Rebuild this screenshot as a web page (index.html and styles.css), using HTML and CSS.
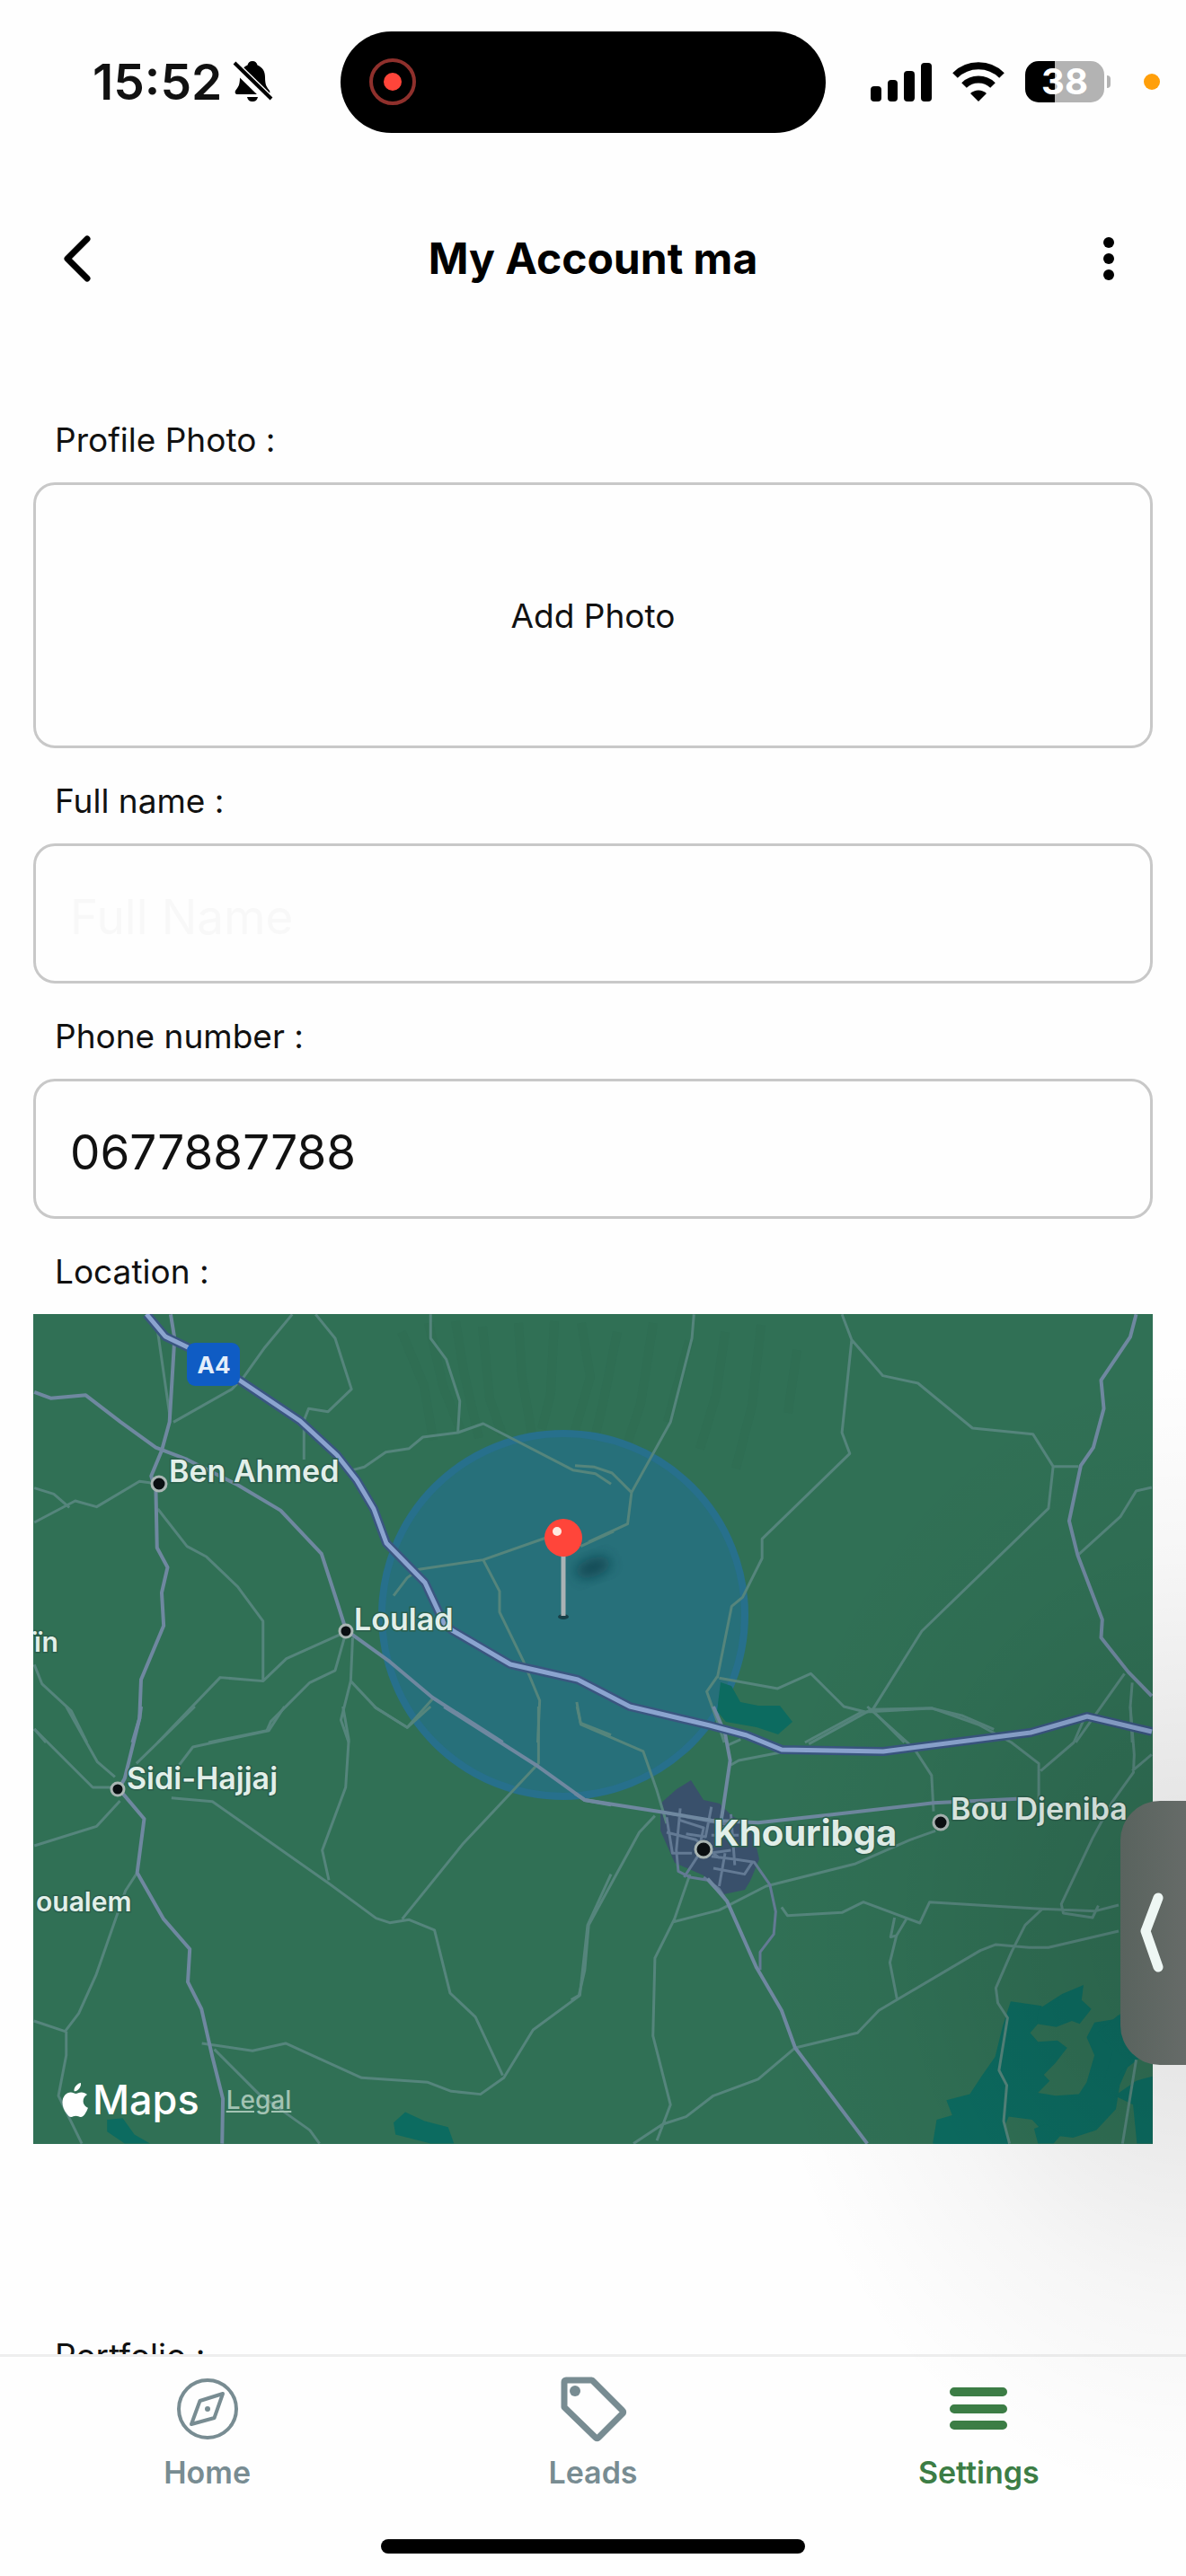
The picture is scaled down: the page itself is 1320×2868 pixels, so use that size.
FILE: index.html
```html
<!DOCTYPE html>
<html lang="en">
<head>
<meta charset="utf-8">
<meta name="viewport" content="width=device-width, initial-scale=1">
<title>My Account</title>
<link rel="stylesheet" href="styles.css">
</head>
<body>
<div class="app">
  <div class="status">
    <div class="status-left">
      <span class="time">15:52</span>
      <svg class="bell" viewBox="0 0 44 48" aria-hidden="true">
        <path d="M22 1c3 0 5 2 5.500 4.500C33 8 36 12 36 19c0 9 2 11 5 15 1 2 0 4-2 4H5c-2 0-3-2-2-4 3-4 5-6 5-15 0-7 3-11 8.500-13.500C17 3 19 1 22 1z"/>
        <path d="M16 41h12c-1 4-3 5-6 5s-5-1-6-5z"/>
        <path class="bell-gap" d="M-1 3l44 43"/>
        <path class="bell-slash" d="M2 3l41 40"/>
      </svg>
    </div>
    <div class="island">
      <svg class="record" viewBox="0 0 52 52" aria-hidden="true"><circle cx="26" cy="26" r="24"/><circle class="record-dot" cx="26" cy="26" r="10"/></svg>
    </div>
    <div class="status-right">
      <svg class="signal" viewBox="0 0 68 44" aria-hidden="true"><rect y="27" width="12" height="17" rx="4"/><rect x="19" y="20" width="11" height="24" rx="4"/><rect x="37" y="10" width="12" height="34" rx="4"/><rect x="56" y="1" width="12" height="43" rx="4"/></svg>
      <svg class="wifi" viewBox="0 0 58 44" aria-hidden="true"><path class="arc" d="M3 15a37 37 0 0 1 52 0M13 26a23 23 0 0 1 32 0"/><path d="M29 44L20 35a13 13 0 0 1 18 0z"/></svg>
      <div class="battery"><span>38</span></div>
      <i class="mic-dot"></i>
    </div>
  </div>

  <header class="header">
    <button class="icon-button" type="button" aria-label="Back"><svg viewBox="0 0 36 52"><path class="back" d="M29 4L7 26l22 22"/></svg></button>
    <h1>My Account ma</h1>
    <button class="icon-button" type="button" aria-label="More"><svg viewBox="0 0 36 52"><circle cx="18" cy="8" r="6"/><circle cx="18" cy="26" r="6"/><circle cx="18" cy="44" r="6"/></svg></button>
  </header>

  <main class="content">
    <form class="form">
      <label class="label" for="photo">Profile Photo :</label>
      <button class="photo" id="photo" type="button">Add Photo</button>
      <label class="label" for="name">Full name :</label>
      <input class="field" id="name" type="text" placeholder="Full Name">
      <label class="label" for="phone">Phone number :</label>
      <input class="field" id="phone" type="tel" value="0677887788">
      <span class="label">Location :</span>

      <div class="map">
        <svg class="map-canvas" viewBox="0 0 1246 924" preserveAspectRatio="xMidYMid slice" role="img" aria-label="Map around Khouribga">
          <defs><filter id="soft" x="-50%" y="-50%" width="200%" height="200%"><feGaussianBlur stdDeviation="7"/></filter></defs>
          <rect class="land" width="1246" height="924"/>
          <g class="relief">
            <path d="M410 20l25 60 10 60M440 10l16 70 20 50M470 8l10 60 16 70M500 14l8 80 14 40M540 10l4 60 12 70M580 8l-4 80-10 40M610 10l10 60-20 70M650 20l-16 80-12 50M690 10l-14 90-20 60M730 30l-24 90M770 20l-10 70-18 60M810 12l-10 90-18 70M850 40l-10 70"/>
          </g>
          <circle class="zone" cx="590" cy="335" r="202"/>
          <!-- lakes -->
          <g class="water" transform="translate(603 437) scale(.4337 .3333)">
            <path d="M918 1460l10-80 40-15-15-50 60-20 30-60 35-65 20-105 20-80 80 15-10 60-20 30 20 30 50-5 25 25-30 50-30 40 15 20-30 40 45 10 60-5 20-40 20-90-20-60 20-50 50-10 45-50 20-10 50 60-20 100-60 60-20 60-10 80-50 70-60 25-70-10-35-50-60-10-10 30 20 90z"/>
            <path d="M1190 1010l60-50 55-30-5 50 25 30-30 50-20-10-40 20-50-10zM1340 1090l55-60 10 100 30 50-50 60-25 0 20-90zM1385 1300l55-50 42-15v225h-40l-10-130zM1178 1410l30-15 40 35-20 30h-40z"/>
          </g>
          <g class="water" transform="translate(-37 437) scale(.4337 .3333)">
            <path d="M275 1380l40-5 30 55 40 30h-65l-45-40zM1010 1390l30-35 50 30 60 20 15 55h-60l-90-30z"/>
          </g>
          <path class="water" d="M765 410l12 4 10 18 20 4 24 0 14 18-16 14-24-8-34-6-10-12z"/>
          <path class="city" d="M746 541l18 4 14 14 22 12 8 36-10 24-6 10-28 6-18-22-32-14-16-36 0-30 18-16 16-10z"/>
          <!-- local roads -->
          <g class="minor" transform="translate(-37 -23) scale(.4337 .3333)">
            <path d="M750 70l-70 110-55 100-30 40-150 110M405 130l32 290M810 70l50 80 42 170-60 75-50-10-12 40v130M1105 70v80l40 70 35 140-5 105M905 590l30-10 55-50 60-12 35-38 90-15 65-30 230 155 58 12 40 35M88 650l50 20 40 45M88 765l105-72 55 20 110-85 30 5M405 720l75 125 50 35 80 100 65 115v200l-110-12L405 1500M675 1295l60-75 145-85M885 1145l-25 115-65 40-100 130-10 30-150 40M905 1150l-5 145-25 130 20 75M900 1295l65 90 80 65 65-95M1010 1010l35-60 30-28 165-32 175-80M1490 845l85-50M1240 890l42 105v70l60 160 43 135-5 140M1480 1365l10 70 78 40M88 1240l20 65 75 90 40 105M88 1455l30 45"/>
          </g>
          <g class="minor" transform="translate(603 -23) scale(.4337 .3333)">
            <path d="M305 70l-5 80-55 280-100 235-50-65-45-20-50-5M145 665l-10 105-100 60M685 70l25 85-25 310 20 70-225 285v65l-50 130-28 30-37 240M710 155l80 120 90 25 140 150 155 20 52 108h65M1227 578l-12 140-325 410-125 260M365 1280l-27 50 30 110 15 60M370 1285l150 35 85-50 85 110 55 18 170-12 80 25 80 45M740 1395l-150 105M765 1395l80 105M1290 875l110-130 40-85 40-12M1410 1270l-125 230M1430 1300l-5 80 5 120"/>
          </g>
          <g class="minor" transform="translate(-37 437) scale(.4337 .3333)">
            <path d="M170 0l80 185 45 50M88 75l150 195h60M88 465l160-65 60-85M500 0l-150 190M730 0l-40 80-195 55-35 60M440 305l105 12 300 275 120 115 35 15 50-10 65 35 40 210 65 80 70 195M880 0l15 110-8 160-60 210 17 100M960 0l85 70 60-70M1382 0v190l-195 270-155 250M1568 560l-60 170-20 235-120 115-75 160-60 55-75-10-60-30-170-15-195-115-85 25-130-25M352 555l-30 60-75 280-45 130-35 60-80-35M170 1085v80l-20 135 60 160M550 1145l115 150 130 120 25 45"/>
          </g>
          <g class="minor" transform="translate(603 437) scale(.4337 .3333)">
            <path d="M5 0l10 60 160 90 35 130 25 110M600 125l160-115 155-5 120 55 85 60 70 70v120M750 0l120 140 45 90 5 120M540 150l-120 30-20 15M425 110l-35 20M1310 30l-30 90-85 95M1425 0l10 160-2 60-55 100-50 120-80 220 5 30 75 15 15-40M1480 160l-50 55M205 365l-40 55-130 310-10 150-15 85-20 15M250 720l120-40 120-80 230-75 140-80 65-30M295 560l-40 150-50 130-5 260 45 230-35 120M530 670l15 28 140-10 55-35 145 70 25-70 275 22 150 8 60-20M820 705l-10 65 15-5 25-55M825 765l-17 90 18 120M150 1460l75-65 60-25 70-70 115-55 95-105 160-50 55-75 260-200 40-20 85 10 50 0 180-55M1200 675l-45 55-35 90-40 120 5 50 25 50-22 175 20 50-8 120 15 75M1440 1180l-35 280"/>
          </g>
          <g class="streets" transform="translate(603 437) scale(.4337 .3333)">
            <path d="M220 352l180 45M235 370l15 120h50M270 340l-10 140 5 70 30 20 45 10 30 40M235 420l75 25 60 60M270 380l60 25-10 60M350 335l-15 100-50-10M400 360l10 170M350 430l70 0M330 470l-50 100M350 500l60 10 50 10 40 75 15 90-5 75-35 60v60M385 490l-15 110M355 540l80 20 20-40M330 570l40 40 20 40M400 480l-55 10M380 400l20 50"/>
          </g>
          <!-- regional roads -->
          <g class="regional" transform="translate(-37 -23) scale(.4337 .3333)">
            <path d="M438 70l10 80-13 280-20 95-27 85 12 50 3 190 27 65-15 85 5 110-58 180-4 130-18 80M88 330l42 20 90-10 90 90 90 85 80 40 130 85 110 85 105 145 35 140 28 115 112 105 110 120 180 150"/>
          </g>
          <g class="regional" transform="translate(603 -23) scale(.4337 .3333)">
            <path d="M1440 70l-15 75-75 145 7 95-27 130-32 60-30 185 22 115 63 215-3 60 70 115 60 80"/>
          </g>
          <g class="regional" transform="translate(-37 437) scale(.4337 .3333)">
            <path d="M362 0l-4 40-38 200-15 35 65 100-18 180 68 155 67 100-5 110 35 90 28 160 27 140-2 150M1140 0l235 195 125 117 68 16"/>
          </g>
          <g class="regional" transform="translate(603 437) scale(.4337 .3333)">
            <path d="M0 290l25 22 195 40 130 28 120 8 180-26 270-40 215-14M355 0l30 90 13 90-18 160-5 40M340 575l50 75 75 220 65 145 35 125 185 320"/>
          </g>
          <!-- motorway -->
          <path class="motorway-case" d="M126 0l21 25 27 13 56 36 67 45 41 38 22 28 19 32 14 38 43 44 21 45 9 8 65 38 75 17 58 30 89 21 41 11 39 16 113 2 164-21 63-18 72 17"/>
          <path class="motorway" d="M126 0l21 25 27 13 56 36 67 45 41 38 22 28 19 32 14 38 43 44 21 45 9 8 65 38 75 17 58 30 89 21 41 11 39 16 113 2 164-21 63-18 72 17"/>
          <g class="town-dot">
            <circle cx="140" cy="189" r="8"/><circle cx="348" cy="353" r="7"/><circle cx="94" cy="529" r="7"/><circle cx="746" cy="596" r="9"/><circle cx="1010" cy="566" r="8"/>
          </g>
          <rect class="shield" x="171" y="32" width="59" height="48" rx="9"/>
          <text class="shield-text" x="201" y="66" text-anchor="middle">A4</text>
          <g class="town">
            <text x="151" y="187">Ben Ahmed</text>
            <text x="357" y="352">Loulad</text>
            <text x="104" y="529">Sidi-Hajjaj</text>
            <text x="1021" y="563">Bou Djeniba</text>
            <text class="small" x="1" y="376">ïn</text>
            <text class="small" x="3" y="665">oualem</text>
            <text class="large" x="757" y="592">Khouribga</text>
          </g>
          <ellipse class="pin-shadow" cx="623" cy="282" rx="20" ry="10" transform="rotate(-20 623 282)"/>
          <ellipse class="pin-base" cx="590" cy="337" rx="6" ry="3"/>
          <path class="pin-stem" d="M590 268v68"/>
          <circle class="pin-head" cx="590" cy="249" r="21"/>
          <circle class="pin-shine" cx="583" cy="242" r="5"/>
        </svg>
        <div class="credit">
          <svg class="apple" viewBox="0 0 30 38" aria-hidden="true"><path d="M21 0c.4 3-1 5.500-2.500 7-1.500 1.600-3.500 2.500-5 2.300C13.200 6.500 14.500 4.200 16 2.700 17.400 1.200 19.500.2 21 0zM28 13c-3 2-4.400 4.500-4.400 7.300 0 3.500 2.200 6.300 5.400 7.500-.8 2.500-2 4.800-3.500 6.900-1.300 1.900-2.700 3.300-4.700 3.300s-2.900-1.200-5.300-1.200c-2.500 0-3.400 1.200-5.300 1.200-2 0-3.500-1.700-4.800-3.600C2.200 30.600.5 26.200.5 21.800.5 15 5 10.600 9.800 10.600c2.300 0 4.300 1.500 5.700 1.500 1.300 0 3.500-1.600 6.200-1.600 2.200 0 4.700.9 6.300 2.500z"/></svg>
          <span class="maps">Maps</span>
          <a class="legal" href="#legal">Legal</a>
        </div>
      </div>
      <span class="label">Portfolio :</span>
    </form>
  </main>

  <nav class="tabs">
    <a class="tab" href="#home">
      <svg viewBox="0 0 80 80" aria-hidden="true"><g class="thin"><circle cx="40" cy="40" r="32"/><path d="M57 23l-9.500 27L22 57l9.500-26z"/></g><circle class="dot" cx="40" cy="40" r="3"/></svg>
      <span>Home</span>
    </a>
    <a class="tab" href="#leads">
      <svg viewBox="0 0 80 80" aria-hidden="true"><path class="thick" d="M10 8h28a2 2 0 0 1 2 1l33 33a2 2 0 0 1 0 3L46 72a2 2 0 0 1-3 0L8 38V10a2 2 0 0 1 2-2z"/><circle class="dot" cx="20" cy="20" r="6"/></svg>
      <span>Leads</span>
    </a>
    <a class="tab active" href="#settings">
      <svg viewBox="0 0 80 80" aria-hidden="true"><path class="bars" d="M13 21h54M13 40h54M13 58h54"/></svg>
      <span>Settings</span>
    </a>
    <i class="home-bar"></i>
  </nav>

  <div class="glow"></div>
  <button class="drawer" type="button" aria-label="Open panel"><svg viewBox="0 0 30 92"><path d="M22 7L8 44l14 40"/></svg></button>
</div>
</body>
</html>
```
FILE: styles.css
```css
* {
  box-sizing: border-box;
}

body {
  margin: 0;
  background: #fefefe;
  color: #111;
  font-family: Inter, "Liberation Sans", sans-serif;
}

button,
input {
  font: inherit;
  color: inherit;
}

.app {
  position: relative;
  display: flex;
  flex-direction: column;
  height: 100vh;
  overflow: hidden;
}

/* status bar */
.status {
  flex: none;
  display: grid;
  grid-template-columns: 379fr 540px 401fr;
  align-items: center;
  height: 182px;
}

.status-left,
.status-right {
  display: flex;
  align-items: center;
}

.status-left {
  gap: 12px;
  padding-left: 103px;
}

.time {
  font-size: 55px;
  font-weight: 600;
  line-height: 64px;
}

.bell {
  width: 44px;
  height: 48px;
  overflow: visible;
}

.bell-gap,
.bell-slash {
  stroke: #fefefe;
  stroke-width: 11px;
}

.bell-slash {
  stroke: #000;
  stroke-width: 4px;
}

.island {
  display: flex;
  align-items: center;
  height: 113px;
  padding-left: 32px;
  border-radius: 57px;
  background: #000;
}

.record {
  width: 52px;
  fill: none;
  stroke: #8f302c;
  stroke-width: 4px;
}

.record-dot {
  fill: #ff453a;
  stroke: none;
}

.status-right {
  padding-left: 50px;
}

.signal {
  width: 68px;
}

.wifi {
  width: 58px;
  margin-left: 23px;
}

.arc {
  fill: none;
  stroke: #000;
  stroke-width: 8px;
}

.battery {
  position: relative;
  width: 88px;
  height: 46px;
  margin-left: 23px;
  border-radius: 15px;
  background: linear-gradient(90deg, #000 38%, #b3b3b3 38%);
  color: #fff;
  font-size: 40px;
  font-weight: 700;
  line-height: 46px;
  text-align: center;
}

.battery::after {
  content: "";
  position: absolute;
  right: -7px;
  top: 16px;
  width: 4px;
  height: 14px;
  border-radius: 0 4px 4px 0;
  background: #b3b3b3;
}

.mic-dot {
  width: 18px;
  height: 18px;
  margin-left: 44px;
  border-radius: 50%;
  background: #ff9f0a;
}

/* title bar */
.header {
  flex: none;
  display: flex;
  align-items: center;
  justify-content: space-between;
  height: 212px;
  padding: 0 68px;
}

.header h1 {
  margin: 0;
  color: #000;
  font-size: 48px;
  font-weight: 700;
  line-height: 56px;
}

.icon-button {
  display: flex;
  padding: 0;
  border: 0;
  background: none;
}

.icon-button svg {
  width: 36px;
  height: 52px;
}

.back {
  fill: none;
  stroke: #000;
  stroke-width: 7px;
  stroke-linecap: round;
  stroke-linejoin: round;
}

/* form */
.content {
  flex: 1;
  min-height: 0;
  overflow: hidden;
  padding: 37px 37px 0;
}

.form {
  display: flex;
  flex-direction: column;
}

.label {
  height: 106px;
  padding: 36px 24px 0;
  font-size: 37px;
  line-height: 46px;
}

.photo,
.field {
  width: 100%;
  border: 3px solid #c8c8c8;
  border-radius: 24px;
  background: none;
}

.photo {
  height: 296px;
  font-size: 37px;
}

.field {
  height: 156px;
  padding: 8px 38px 0;
  font-size: 53px;
}

.field::placeholder {
  color: #f8f8f8;
  opacity: 1;
}

/* map */
.map {
  position: relative;
  height: 924px;
  margin-bottom: 177px;
  overflow: hidden;
}

.map-canvas {
  display: block;
  width: 100%;
  height: 100%;
}

.map-canvas path {
  stroke-linejoin: round;
}

.land {
  fill: #307055;
}

.relief {
  fill: none;
  stroke: #2a684f;
  stroke-width: 10px;
  opacity: .25;
}

.zone {
  fill: #27707a;
  stroke: #27708c;
  stroke-width: 8px;
}

.water {
  fill: #0c6b60;
}

.city {
  fill: #39506b;
}

.minor path,
.streets path {
  fill: none;
  stroke: #55857c;
  stroke-width: 3px;
  vector-effect: non-scaling-stroke;
}

.streets path {
  stroke: #637a94;
}

.regional path {
  fill: none;
  stroke: #6f88a0;
  stroke-width: 4px;
  vector-effect: non-scaling-stroke;
}

.motorway-case,
.motorway {
  fill: none;
  stroke: #3a5680;
  stroke-width: 10px;
}

.motorway {
  stroke: #8ba4cf;
  stroke-width: 5px;
}

.town-dot {
  fill: #0a0f12;
  stroke: #a9b5b3;
  stroke-width: 3px;
}

.shield {
  fill: #0f5cc4;
}

.shield-text {
  fill: #e4eefa;
  font-size: 26px;
  font-weight: 700;
}

.town {
  fill: #e2efe9;
  stroke: #2b5f4c;
  stroke-width: 3px;
  paint-order: stroke;
  font-size: 34px;
  font-weight: 600;
}

.town .small {
  font-size: 30px;
}

.town .large {
  font-size: 40px;
  font-weight: 700;
}

.pin-shadow {
  fill: #0d3f4c;
  opacity: .8;
  filter: url(#soft);
}

.pin-base {
  fill: #174048;
}

.pin-stem {
  stroke: #aab3b5;
  stroke-width: 5px;
}

.pin-head {
  fill: #ff453a;
}

.pin-shine {
  fill: #ffe9e0;
}

.credit {
  position: absolute;
  left: 32px;
  bottom: 21px;
  display: flex;
  align-items: center;
  color: #fff;
}

.apple {
  width: 30px;
  height: 38px;
  fill: #fff;
}

.maps {
  margin-left: 4px;
  font-size: 45px;
  font-weight: 500;
  line-height: 56px;
}

.legal {
  margin-left: 30px;
  color: #a3c3b3;
  font-size: 28px;
  font-weight: 500;
  line-height: 40px;
}

/* tab bar */
.tabs {
  position: relative;
  flex: none;
  display: flex;
  height: 247px;
  padding: 18px 16px 0;
  border-top: 3px solid #eee;
  background: #fefefe;
}

.tab {
  flex: 1;
  display: flex;
  flex-direction: column;
  align-items: center;
  color: #788c92;
  font-size: 34px;
  font-weight: 600;
  line-height: 40px;
  text-decoration: none;
}

.tab svg {
  width: 80px;
  height: 80px;
  margin-bottom: 11px;
  fill: none;
  stroke: currentColor;
  stroke-linejoin: round;
}

.tab .thin {
  stroke-width: 4px;
}

.tab .thick {
  stroke-width: 7px;
}

.tab .dot {
  fill: currentColor;
  stroke: none;
}

.tab .bars {
  stroke-width: 10px;
  stroke-linecap: round;
}

.tab.active {
  color: #3c7d45;
}

.home-bar {
  position: absolute;
  left: 50%;
  bottom: 25px;
  width: 472px;
  height: 16px;
  margin-left: -236px;
  border-radius: 8px;
  background: #000;
}

/* side panel handle and the shade it casts */
.glow {
  position: absolute;
  right: 0;
  bottom: 80px;
  width: 480px;
  height: 1280px;
  background: radial-gradient(ellipse 100% 50% at 100% 50%, rgba(0, 0, 0, .12), rgba(0, 0, 0, .08) 35%, rgba(0, 0, 0, .03) 65%, rgba(0, 0, 0, .01) 85%, transparent);
  pointer-events: none;
}

.drawer {
  position: absolute;
  right: 0;
  bottom: 569px;
  width: 73px;
  height: 294px;
  padding: 0 0 0 20px;
  border: 0;
  border-radius: 44px 0 0 44px;
  background: linear-gradient(90deg, #59635e, #666b68);
}

.drawer svg {
  display: block;
  width: 30px;
  height: 92px;
  fill: none;
  stroke: #eef7f4;
  stroke-width: 11px;
  stroke-linecap: round;
  stroke-linejoin: round;
}
```
